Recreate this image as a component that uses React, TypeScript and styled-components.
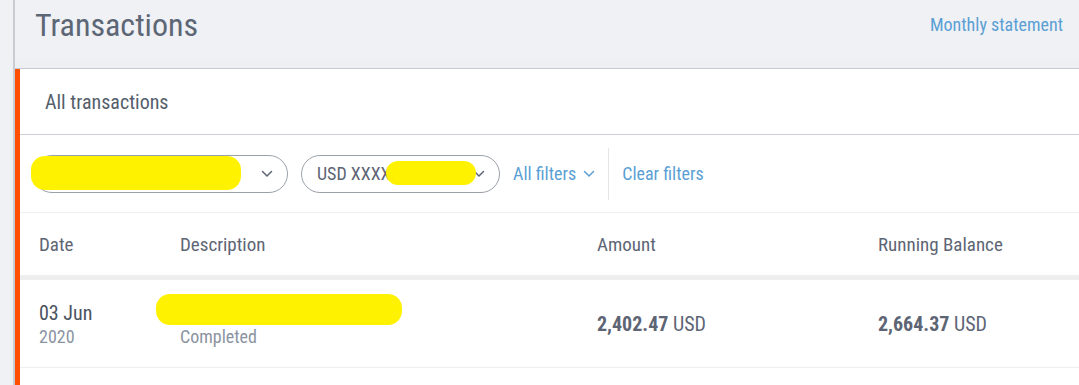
import React from 'react';
import styled, { createGlobalStyle } from 'styled-components';

const GlobalStyle = createGlobalStyle`
  html, body {
    margin: 0;
    padding: 0;
    background: #eff1f5;
    font-family: "Roboto Condensed", "Liberation Sans Narrow", "DejaVu Sans Condensed", Roboto, sans-serif;
    color: #555e6b;
  }
`;

const Page = styled.div`
  margin-left: 13px;
  border-left: 2px solid #c8ccd2;
  min-height: 385px;
  overflow: hidden;
`;

const Header = styled.header`
  height: 68px;
  display: flex;
  align-items: flex-start;
  justify-content: space-between;
  padding: 0 16px 0 20px;
  border-bottom: 1px solid #c6cad1;
  background: linear-gradient(#eff1f5 80%, #eceef2);
`;

const Title = styled.h1`
  margin: 6px 0 0;
  font-size: 32px;
  font-weight: 400;
  color: #5d6675;
`;

const Link = styled.a`
  margin-top: 14px;
  font-size: 18px;
  color: #5a9fd4;
  cursor: pointer;
`;

const Card = styled.section`
  background: #fff;
  border-left: 5px solid #ff4f00;
  min-height: 316px;
`;

const CardTitle = styled.div`
  height: 65px;
  display: flex;
  align-items: center;
  padding-left: 25px;
  font-size: 20px;
  border-bottom: 1px solid #ccd0d6;
`;

const Filters = styled.div`
  height: 77px;
  display: flex;
  align-items: center;
  padding-left: 13px;
  border-bottom: 1px solid #eceef0;
`;

const Pill = styled.div<{ $w: number }>`
  position: relative;
  width: ${(p) => p.$w}px;
  height: 38px;
  box-sizing: border-box;
  border: 1px solid #9ba1aa;
  border-radius: 19px;
  display: flex;
  align-items: center;
  justify-content: space-between;
  padding: 0 14px 0 15px;
  margin-right: 13px;
  font-size: 18px;
  color: #5d6575;
`;

// yellow marker strokes that hide private data in the screenshot
const Redact = styled.span<{ $l: number; $t: number; $w: number; $h: number }>`
  position: absolute;
  left: ${(p) => p.$l}px;
  top: ${(p) => p.$t}px;
  width: ${(p) => p.$w}px;
  height: ${(p) => p.$h}px;
  background: #fff200;
  border-radius: 14px;
`;

const FilterLink = styled.span`
  display: flex;
  align-items: center;
  gap: 7px;
  font-size: 18px;
  color: #5a9fd4;
  padding: 0 13px 0 0;
  height: 52px;
  & + & {
    padding-left: 13px;
    border-left: 1px solid #e3e5e8;
  }
`;

const Row = styled.div<{ $h: number }>`
  display: grid;
  grid-template-columns: 141px 417px 281px 1fr;
  align-items: center;
  height: ${(p) => p.$h}px;
  padding-left: 19px;
`;

const HeadRow = styled(Row)`
  border-bottom: 5px solid #eeeeee;
  font-size: 19px;
  color: #5d6575;
`;

const BodyRow = styled(Row)`
  border-bottom: 1px solid #eceef0;
`;

const Main = styled.div`
  position: relative;
  display: flex;
  flex-direction: column;
  gap: 1px;
  font-size: 20px;
  color: #4a5261;
`;

const Sub = styled.div`
  font-size: 18px;
  color: #8a93a1;
`;

const Money = styled.div`
  font-size: 20px;
  color: #5d6575;
  b {
    font-weight: 700;
  }
`;

const Chevron = ({ color = '#5d6575' }: { color?: string }) => (
  <svg width="12" height="8" viewBox="0 0 12 8" fill="none">
    <path d="M1.5 1.5 6 6l4.5-4.5" stroke={color} strokeWidth="1.5" strokeLinecap="round" />
  </svg>
);

export default function App() {
  return (
    <>
      <GlobalStyle />
      <Page>
        <Header>
          <Title>Transactions</Title>
          <Link>Monthly statement</Link>
        </Header>
        <Card>
          <CardTitle>All transactions</CardTitle>
          <Filters>
            <Pill $w={255}>
              <span>All accounts</span>
              <Chevron />
              <Redact $l={-3} $t={0} $w={210} $h={34} />
            </Pill>
            <Pill $w={199}>
              <span>USD XXXX 1234</span>
              <Chevron />
              <Redact $l={84} $t={5} $w={90} $h={24} />
            </Pill>
            <FilterLink>
              All filters <Chevron color="#5a9fd4" />
            </FilterLink>
            <FilterLink>Clear filters</FilterLink>
          </Filters>
          <HeadRow $h={62}>
            <span>Date</span>
            <span>Description</span>
            <span>Amount</span>
            <span>Running Balance</span>
          </HeadRow>
          <BodyRow $h={87}>
            <Main>
              03 Jun
              <Sub>2020</Sub>
            </Main>
            <Main>
              Hidden payee name
              <Sub>Completed</Sub>
              <Redact $l={-24} $t={-7} $w={246} $h={31} />
            </Main>
            <Money>
              <b>2,402.47</b> USD
            </Money>
            <Money>
              <b>2,664.37</b> USD
            </Money>
          </BodyRow>
        </Card>
      </Page>
    </>
  );
}
